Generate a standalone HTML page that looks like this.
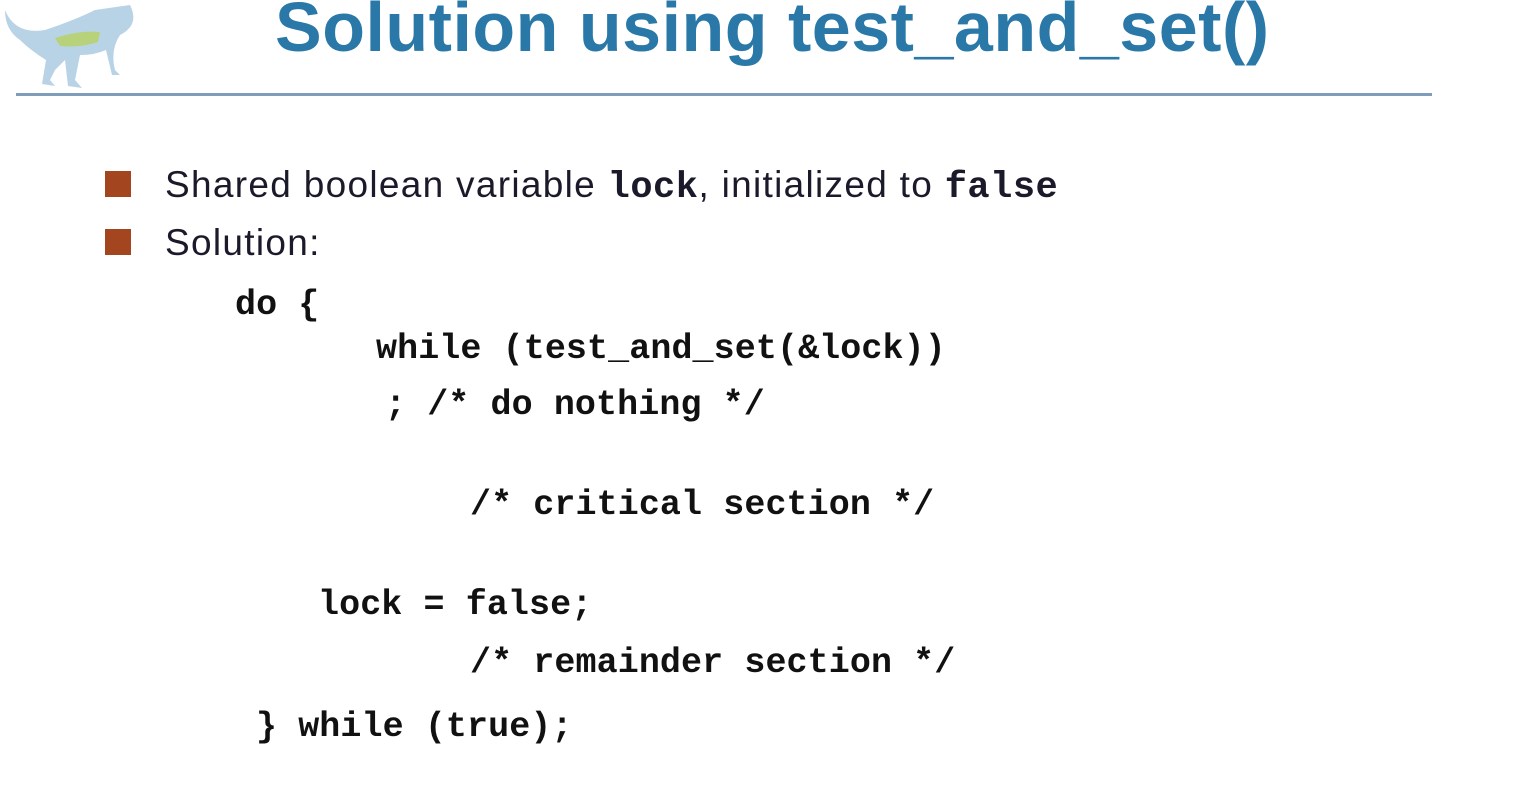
<!DOCTYPE html>
<html><head><meta charset="utf-8"><style>
body{margin:0;width:1524px;height:788px;background:#fff;position:relative;overflow:hidden;font-family:"Liberation Sans",sans-serif}
.a{position:absolute;white-space:pre;line-height:1}
.t{font-weight:bold;color:#2a78a8;font-size:70px;left:275px;top:-8px;letter-spacing:0.5px}
.b{font-size:37px;color:#1a1a2a;left:165px;letter-spacing:1.3px}
.sq{position:absolute;left:105px;width:26px;height:26px;background:#a3461f}
.c{font-family:"Liberation Mono",monospace;font-weight:bold;font-size:35px;color:#111;letter-spacing:0.1px}
.m{font-family:"Liberation Mono",monospace;font-weight:bold;letter-spacing:0.5px}
</style></head><body>
<svg class="a" style="left:0;top:0" width="150" height="95">
<path d="M5 10 Q15 35 45 30 Q75 20 95 10 L130 5 Q140 25 120 35 Q110 50 115 70 L120 75 L112 75 L106 50 Q95 55 80 55 L75 80 L82 88 L68 86 L65 60 L55 70 L50 80 L55 86 L42 84 L46 60 Q30 50 20 40 Q5 30 5 10Z" fill="#b9d3e6"/>
<path d="M55 38 Q80 30 100 32 L98 42 Q80 48 60 46Z" fill="#b7d27a"/>
</svg>
<div class="a t">Solution using test_and_set()</div>
<div style="position:absolute;left:16px;top:93px;width:1416px;height:3px;background:#7f9cbb"></div>
<div class="sq" style="top:171px"></div>
<div class="a b" style="top:166px">Shared boolean variable <span class="m">lock</span>, initialized to <span class="m">false</span></div>
<div class="sq" style="top:229px"></div>
<div class="a b" style="top:224px">Solution:</div>
<div class="a c" style="left:235px;top:288px">do {</div>
<div class="a c" style="left:376px;top:332px">while (test_and_set(&amp;lock))</div>
<div class="a c" style="left:385px;top:388px">; /* do nothing */</div>
<div class="a c" style="left:470px;top:488px">/* critical section */</div>
<div class="a c" style="left:318px;top:588px">lock = false;</div>
<div class="a c" style="left:470px;top:646px">/* remainder section */</div>
<div class="a c" style="left:256px;top:710px">} while (true);</div>
</body></html>
